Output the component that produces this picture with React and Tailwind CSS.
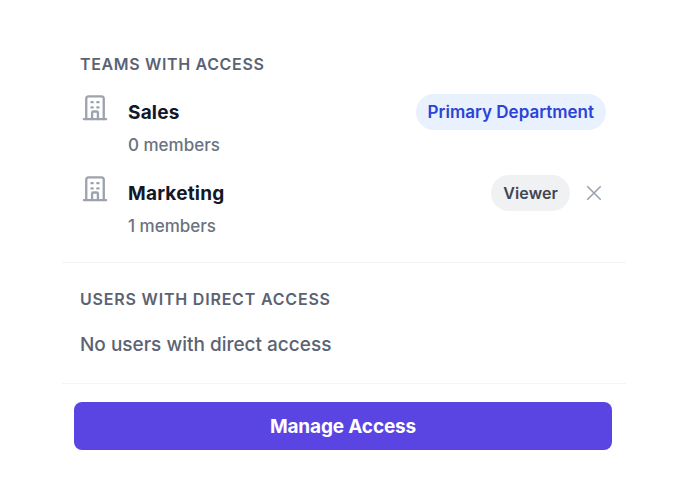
import React from 'react';

const BuildingIcon = () => (
  <svg width="28" height="28" viewBox="0 0 24 24" fill="none" stroke="#9ca3af" strokeWidth="2" strokeLinecap="round" strokeLinejoin="round">
    <path d="M2.5 21.5h19" />
    <path d="M4.5 21.5V4a2 2 0 0 1 2-2h11a2 2 0 0 1 2 2v17.5" />
    <path d="M9 7h1M14 7h1M9 11.5h1M14 11.5h1" />
    <path d="M9.5 21.5V16a1 1 0 0 1 1-1h3a1 1 0 0 1 1 1v5.5" />
  </svg>
);

const TeamRow = ({ name, members, children }) => (
  <div className="flex items-start h-[81px]">
    <div className="w-[48px] ml-[1px] -mr-[1px]">
      <BuildingIcon />
    </div>
    <div className="flex-1">
      <div className="flex items-center justify-between h-[36px]">
        <span className="pt-[2px] text-[19px] font-bold tracking-[0.2px] text-[#111827]">{name}</span>
        {children}
      </div>
      <div className="mt-[5px] text-[17px] font-medium leading-[20px] text-[#6b7280]">{members}</div>
    </div>
  </div>
);

export default function App() {
  return (
    <div className="w-[687px] h-[489px] bg-white pl-[62px] pr-[61px] pt-[54px] font-['Inter',sans-serif]">
      <section className="px-[18px] pr-[20px] h-[209px] border-b border-[#f3f4f6]">
        <h3 className="text-[16px] leading-[20px] font-semibold tracking-[0.65px] text-[#5b6372] mb-[20px]">TEAMS WITH ACCESS</h3>
        <TeamRow name="Sales" members="0 members">
          <span className="h-[36px] px-[12px] pt-[2px] flex items-center rounded-full bg-[#e8f1fd] text-[17px] font-semibold text-[#2b44d6]">Primary Department</span>
        </TeamRow>
        <TeamRow name="Marketing" members="1 members">
          <div className="flex items-center gap-[14px] pr-[2px]">
            <span className="h-[36px] px-[12px] flex items-center rounded-full bg-[#f0f1f3] text-[16px] font-semibold tracking-[0.1px] text-[#3f4653]">Viewer</span>
            <svg width="20" height="20" viewBox="0 0 24 24" fill="none" stroke="#9ca3af" strokeWidth="2" strokeLinecap="round">
              <path d="M4.5 4.5l15 15M19.5 4.5l-15 15" />
            </svg>
          </div>
        </TeamRow>
      </section>
      <section className="px-[18px] h-[121px] border-b border-[#f3f4f6] pt-[26px]">
        <h3 className="text-[16px] leading-[20px] font-semibold tracking-[0.8px] text-[#5b6372]">USERS WITH DIRECT ACCESS</h3>
        <p className="mt-[23px] text-[19px] leading-[26px] font-medium text-[#5b6372]">No users with direct access</p>
      </section>
      <div className="px-[12px] pr-[14px] pt-[18px]">
        <button className="w-full h-[48px] pt-[2px] rounded-[8px] bg-[#5a45e2] text-white text-[19px] font-bold tracking-[-0.15px]">Manage Access</button>
      </div>
    </div>
  );
}
